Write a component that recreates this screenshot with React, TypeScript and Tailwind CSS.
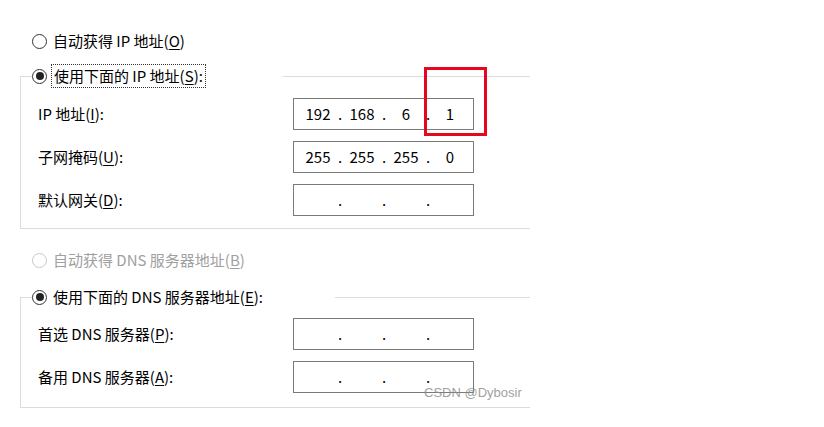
import React from 'react'

const FONT = '"Noto Sans CJK SC", "Noto Sans", "Liberation Sans", sans-serif'

function Key({ k }: { k: string }) {
  return <span className="underline underline-offset-2">{k}</span>
}

function Radio({ checked, disabled }: { checked?: boolean; disabled?: boolean }) {
  return (
    <span
      className={`flex h-[15px] w-[15px] shrink-0 items-center justify-center rounded-full border bg-white ${
        disabled ? 'border-[#c8c8c8]' : 'border-[#333333]'
      }`}
    >
      {checked && <span className="h-[8px] w-[8px] rounded-full bg-[#222222]" />}
    </span>
  )
}

function IpBox({ octets }: { octets?: string[] }) {
  const vals = octets ?? ['', '', '', '']
  return (
    <div className="flex h-[32px] w-[181px] items-center border border-[#7a7a7a] bg-white pl-[4px] text-[15px] text-black">
      {vals.map((v, i) => (
        <React.Fragment key={i}>
          <span className="w-[40px] text-center">{v}</span>
          {i < 3 && <span className="w-[4px] text-center">.</span>}
        </React.Fragment>
      ))}
    </div>
  )
}

function Row({ label, octets }: { label: React.ReactNode; octets?: string[] }) {
  return (
    <div className="flex h-[32px] items-center">
      <span className="w-[255px] text-[15px] text-black">{label}</span>
      <IpBox octets={octets} />
    </div>
  )
}

function GroupHeader({ children, gap }: { children: React.ReactNode; gap: number }) {
  return (
    <div className="flex h-[24px] items-center">
      <div className="h-[12px] w-[12px] self-end border-l border-t border-[#dcdcdc]" />
      {children}
      <div style={{ width: gap }} />
      <div className="h-[12px] flex-1 self-end border-t border-[#dcdcdc]" />
    </div>
  )
}

export default function App() {
  return (
    <div className="relative h-[427px] w-[824px] overflow-hidden bg-white" style={{ fontFamily: FONT }}>
      <div className="flex w-[530px] flex-col pl-[20px] pt-[30px]">
        {/* 自动获得 IP */}
        <div className="flex h-[22px] items-center gap-[6px] pl-[12px] text-[15px] text-black">
          <Radio />
          <span>
            自动获得 IP 地址(<Key k="O" />)
          </span>
        </div>

        {/* IP group */}
        <div className="mt-[12px]">
          <GroupHeader gap={77}>
            <Radio checked />
            <span className="ml-[4px] flex h-[24px] items-center border border-dotted border-[#333333] px-[2px] text-[15px] text-black">
              使用下面的 IP 地址(<Key k="S" />):
            </span>
          </GroupHeader>
          <div className="flex flex-col gap-[11px] border-b border-l border-[#dcdcdc] pb-[12px] pl-[17px] pt-[10px]">
            <Row
              label={
                <>
                  IP 地址(<Key k="I" />):
                </>
              }
              octets={['192', '168', '6', '1']}
            />
            <Row
              label={
                <>
                  子网掩码(<Key k="U" />):
                </>
              }
              octets={['255', '255', '255', '0']}
            />
            <Row
              label={
                <>
                  默认网关(<Key k="D" />):
                </>
              }
            />
          </div>
        </div>

        {/* 自动获得 DNS (disabled) */}
        <div className="mt-[20px] flex h-[22px] items-center gap-[6px] pl-[12px] text-[15px] text-[#a0a0a0]">
          <Radio disabled />
          <span>
            自动获得 DNS 服务器地址(<Key k="B" />)
          </span>
        </div>

        {/* DNS group */}
        <div className="mt-[14px]">
          <GroupHeader gap={72}>
            <Radio checked />
            <span className="ml-[6px] text-[15px] text-black">
              使用下面的 DNS 服务器地址(<Key k="E" />):
            </span>
          </GroupHeader>
          <div className="flex flex-col gap-[11px] border-b border-l border-[#dcdcdc] pb-[14px] pl-[17px] pt-[9px]">
            <Row
              label={
                <>
                  首选 DNS 服务器(<Key k="P" />):
                </>
              }
            />
            <Row
              label={
                <>
                  备用 DNS 服务器(<Key k="A" />):
                </>
              }
            />
          </div>
        </div>
      </div>

      {/* annotation box */}
      <div className="absolute left-[424px] top-[67px] h-[69px] w-[63px] border-[3px] border-[#e8051f]" />

      {/* watermark */}
      <div
        className="absolute left-[424px] top-[385px] text-[13px] leading-[15px] text-[#8a8a8a] opacity-80"
        style={{ fontFamily: '"Liberation Sans", sans-serif' }}
      >
        CSDN @Dybosir
      </div>
    </div>
  )
}
